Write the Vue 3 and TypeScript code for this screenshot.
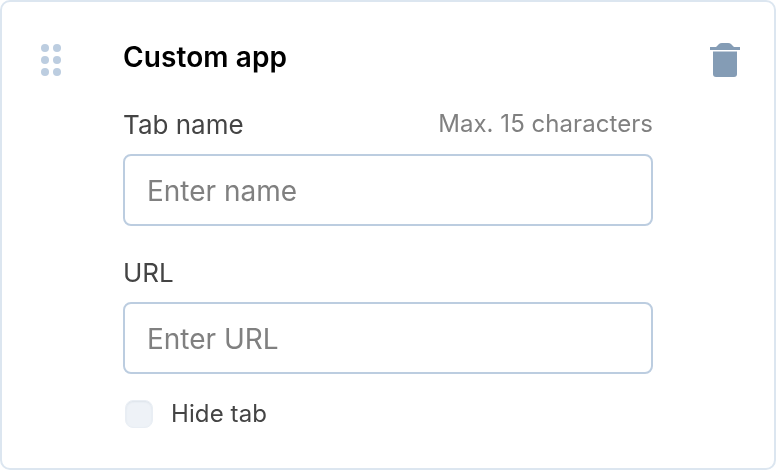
<script setup lang="ts">
const dots = [0, 1, 2, 3, 4, 5];
</script>

<template>
  <div class="card">
    <div class="grip">
      <span v-for="d in dots" :key="d" class="dot"></span>
    </div>
    <div class="body">
      <h3 class="title">Custom app</h3>
      <div class="label-row">
        <label>Tab name</label>
        <span class="hint">Max. 15 characters</span>
      </div>
      <input class="field" type="text" placeholder="Enter name" />
      <div class="label-row second">
        <label>URL</label>
      </div>
      <input class="field" type="text" placeholder="Enter URL" />
      <div class="check-row">
        <span class="check"></span>
        <span class="check-label">Hide tab</span>
      </div>
    </div>
    <svg class="trash" width="30" height="34" viewBox="0 0 30 34">
      <path d="M0 4h6l3-3Q10 0 12 0h6q2 0 3 1l3 3h6v3H0z" fill="#849cb5" />
      <path d="M3 8.5h24V31q0 3-3 3H6q-3 0-3-3z" fill="#849cb5" />
    </svg>
  </div>
</template>

<style scoped>
.card {
  box-sizing: border-box;
  width: 776px;
  height: 470px;
  border: 2px solid #dce6f0;
  border-radius: 10px;
  background: #fff;
  display: flex;
  padding: 40px 34px 0 39px;
  font-family: Inter, "Liberation Sans", sans-serif;
  color: #444;
}
.grip {
  width: 22px;
  height: 34px;
  display: grid;
  grid-template-columns: 8px 8px;
  grid-auto-rows: 8px;
  column-gap: 4px;
  row-gap: 4px;
  flex: none;
  margin-top: 2px;
}
.dot {
  width: 8px;
  height: 8px;
  border-radius: 50%;
  background: #bccde0;
}
.body {
  width: 530px;
  margin-left: 60px;
  flex: none;
  will-change: transform;
}
.title {
  margin: 0;
  font-size: 28px;
  line-height: 30px;
  font-weight: 600;
  letter-spacing: 0.1px;
  color: #000;
}
.label-row {
  display: flex;
  justify-content: space-between;
  margin-top: 38px;
  height: 30px;
  font-size: 26px;
  line-height: 30px;
}
.label-row.second {
  margin-top: 32px;
}
.hint {
  font-size: 24px;
  line-height: 28px;
  letter-spacing: 0.05px;
  color: #808080;
}
.field {
  display: block;
  box-sizing: border-box;
  width: 530px;
  height: 72px;
  margin-top: 14px;
  padding: 2px 22px 0;
  border: 2px solid #bccde0;
  border-radius: 8px;
  font-family: inherit;
  font-size: 28px;
  color: #444;
  outline: none;
}
.field::placeholder {
  color: #808080;
  opacity: 1;
}
.check-row {
  display: flex;
  align-items: center;
  margin-top: 26px;
  padding-left: 2px;
}
.check {
  box-sizing: border-box;
  width: 28px;
  height: 28px;
  border-radius: 8px;
  background: #eef2f7;
  border: 1px solid #e9eef4;
  box-shadow: inset 0 1px 2px rgba(120, 140, 160, 0.14);
}
.check-label {
  margin-left: 18px;
  font-size: 24px;
  line-height: 28px;
  letter-spacing: 0.1px;
}
.trash {
  flex: none;
  margin-left: 57px;
  margin-top: 1px;
}
</style>

<style>
html, body {
  margin: 0;
  background: #fff;
}
</style>
